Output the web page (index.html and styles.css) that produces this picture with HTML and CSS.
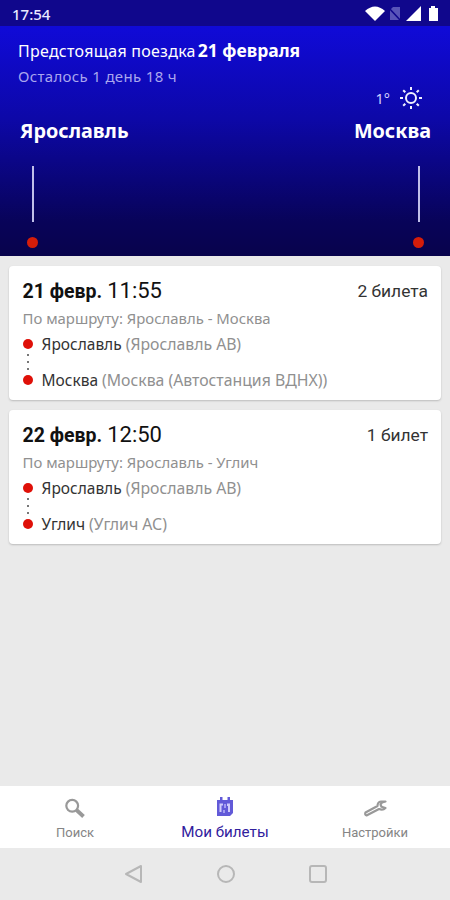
FILE: index.html
```html
<!DOCTYPE html>
<html lang="ru">
<head>
<meta charset="utf-8">
<title>Мои билеты</title>
<link rel="stylesheet" href="styles.css">
</head>
<body>
<div class="status">
  <span class="clock">17:54</span>
  <svg class="status-icons" width="76" height="18" viewBox="0 0 76 18">
    <path d="M1 6Q11 -3 21 6L11 16Z" fill="#fff"/>
    <path d="M26 5L29 2H36V15H26Z" fill="#5954b8"/><path d="M24 2L37 16" stroke="#10078c" stroke-width="1.6"/>
    <path d="M42 16L57 1V16Z" fill="#fff"/>
    <path d="M65 3H67V1H71V3H74V16H65Z" fill="#fff"/>
  </svg>
</div>
<header class="trip">
  <div class="trip-title"><span class="upcoming">Предстоящая поездка</span><b class="trip-date">21 февраля</b></div>
  <div class="remaining">Осталось 1 день 18 ч</div>
  <div class="weather"><span>1°</span>
    <svg width="24" height="24" viewBox="0 0 24 24" fill="none" stroke="#f0f0ff" stroke-width="2"><circle cx="12" cy="12" r="5"/><path d="M12 1V4M12 20V23M1 12H4M20 12H23M4.2 4.2L6.3 6.3M17.7 17.7L19.8 19.8M4.2 19.8L6.3 17.7M17.7 6.3L19.8 4.2"/></svg>
  </div>
  <div class="cities"><span>Ярославль</span><span>Москва</span></div>
  <div class="pins"><div class="pin"><i></i><b></b></div><div class="pin"><i></i><b></b></div></div>
</header>
<main>
  <article class="card">
    <div class="card-head"><div class="when"><b>21 февр.</b><span>11:55</span></div><span class="count">2 билета</span></div>
    <div class="route">По маршруту: Ярославль - Москва</div>
    <div class="stop"><i class="dot"></i><span class="city">Ярославль</span><span class="station">(Ярославль АВ)</span></div>
    <div class="link"><i></i><i></i><i></i></div>
    <div class="stop"><i class="dot"></i><span class="city">Москва</span><span class="station">(Москва (Автостанция ВДНХ))</span></div>
  </article>
  <article class="card">
    <div class="card-head"><div class="when"><b>22 февр.</b><span>12:50</span></div><span class="count">1 билет</span></div>
    <div class="route">По маршруту: Ярославль - Углич</div>
    <div class="stop"><i class="dot"></i><span class="city">Ярославль</span><span class="station">(Ярославль АВ)</span></div>
    <div class="link"><i></i><i></i><i></i></div>
    <div class="stop"><i class="dot"></i><span class="city">Углич</span><span class="station">(Углич АС)</span></div>
  </article>
</main>
<nav class="tabs">
  <div class="tab"><svg width="24" height="24" viewBox="0 0 24 24" fill="none" stroke="#999"><circle cx="9.2" cy="8.8" r="5.9" stroke-width="2.2"/><path d="M13.5 13L20.5 19.5" stroke-width="3.8"/></svg><span>Поиск</span></div>
  <div class="tab active"><svg width="24" height="24" viewBox="0 0 24 24"><path d="M4 4H7V1H9.5V4H14.5V1H17V4H20V17L17 20H4Z" fill="#625ad8"/><path d="M6.5 7.5H10V9.5H8.5V16H6.5ZM14 7.5H17V16H15V10H14Z" fill="#d0ccfb"/><path d="M11 8H13V12H11ZM10 14H12V17H10Z" fill="#a39df0"/></svg><span>Мои билеты</span></div>
  <div class="tab"><svg width="26" height="24" viewBox="0 0 26 24" fill="none" stroke="#999" stroke-width="2.2" stroke-linejoin="round"><path d="M23.5 4.5H19Q15.5 5 15.5 9L3.5 15.5Q2.5 18 4.5 18.5L17 12Q21 13.5 23.5 11L19.5 9.8L18.5 7.5L20 5.5Z"/></svg><span>Настройки</span></div>
</nav>
<footer class="system">
  <svg width="20" height="20" viewBox="0 0 20 20"><path d="M17 2V18L2 10Z"/></svg>
  <svg width="20" height="20" viewBox="0 0 20 20"><circle cx="10" cy="10" r="8"/></svg>
  <svg width="20" height="20" viewBox="0 0 20 20"><rect x="2" y="2" width="16" height="16" rx="2"/></svg>
</footer>
</body>
</html>
```
FILE: styles.css
```css
* { box-sizing: border-box; }
body { margin: 0; height: 900px; display: flex; flex-direction: column; background: #eaeaea; font-family: "Noto Sans", sans-serif; overflow: hidden; white-space: nowrap; }
.status { height: 26px; background: #10078c; color: #e9e9ff; display: flex; justify-content: space-between; padding: 5px 10px 0 12px; }
.clock { font-size: 15px; line-height: 18px; font-weight: 500; }
.trip { height: 230px; background: linear-gradient(#100ad8, #0d08a8 40%, #080359 85%, #08034c); color: #fff; padding: 14px 19px 0 18px; }
.trip-title { height: 22px; line-height: 22px; font-size: 16px; display: flex; gap: 2px; }
.upcoming { letter-spacing: .26px; }
.trip-date { font-size: 17.5px; line-height: 20px; }
.remaining { margin-top: 3px; font-size: 15px; letter-spacing: .33px; line-height: 22px; color: #aaa6ee; }
.weather { height: 24px; display: flex; justify-content: flex-end; align-items: center; gap: 9px; font-size: 14.5px; color: #d5d3ff; margin: -1px 8px 0 0; }
.cities { margin: 7px 0 0 2px; display: flex; justify-content: space-between; font-size: 19.8px; font-weight: 700; line-height: 28px; }
.pins { display: flex; justify-content: space-between; margin: 21px 7px 0 9px; }
.pin { display: flex; flex-direction: column; align-items: center; gap: 15px; }
.pin i { width: 2px; height: 56px; background: #c0bfe9; }
.pin b { width: 11px; height: 11px; border-radius: 50%; background: #d51d0a; }
main { flex: 1; padding: 10px 9px; display: flex; flex-direction: column; gap: 10px; }
.card { height: 134px; background: #fff; border-radius: 4px; box-shadow: 0 1px 2px #bbb; padding: 9px 13px 0 13.5px; }
.card-head { display: flex; justify-content: space-between; align-items: center; height: 30px; color: #111; }
.when { display: flex; align-items: baseline; gap: 5px; font-family: Roboto, sans-serif; font-size: 22px; }
.when b { font-size: 19.5px; }
.count { font-size: 17.4px; font-family: Roboto, sans-serif; color: #333; padding-top: 2px; }
.route { font-size: 14.9px; line-height: 22px; margin-top: 2px; color: #909090; }
.stop { height: 20px; line-height: 20px; margin-top: 5px; display: flex; align-items: center; gap: 4px; font-size: 15.5px; }
.dot { width: 10px; height: 10px; border-radius: 50%; background: #df1008; margin-right: 5px; }
.city { color: #333; }
.station { color: #909090; font-size: 15.8px; }
.link { width: 10px; height: 16px; display: flex; flex-direction: column; align-items: center; justify-content: space-between; }
.link + .stop { margin-top: 0; }
.link i { width: 2px; height: 2px; background: #777; }
.tabs { height: 62px; background: #fff; display: flex; }
.tab { flex: 1; display: flex; flex-direction: column; align-items: center; padding-top: 11px; font-family: Roboto, sans-serif; font-size: 13px; color: #858585; }
.tab span { line-height: 18px; margin-top: 3px; }
.active { color: #30209d; font-size: 15.2px; padding-top: 10px; }
.system { height: 52px; display: flex; justify-content: center; align-items: center; gap: 72px; padding-left: 1px; }
.system svg { fill: none; stroke: #b7b7b7; stroke-width: 2; stroke-linejoin: round; }
```
